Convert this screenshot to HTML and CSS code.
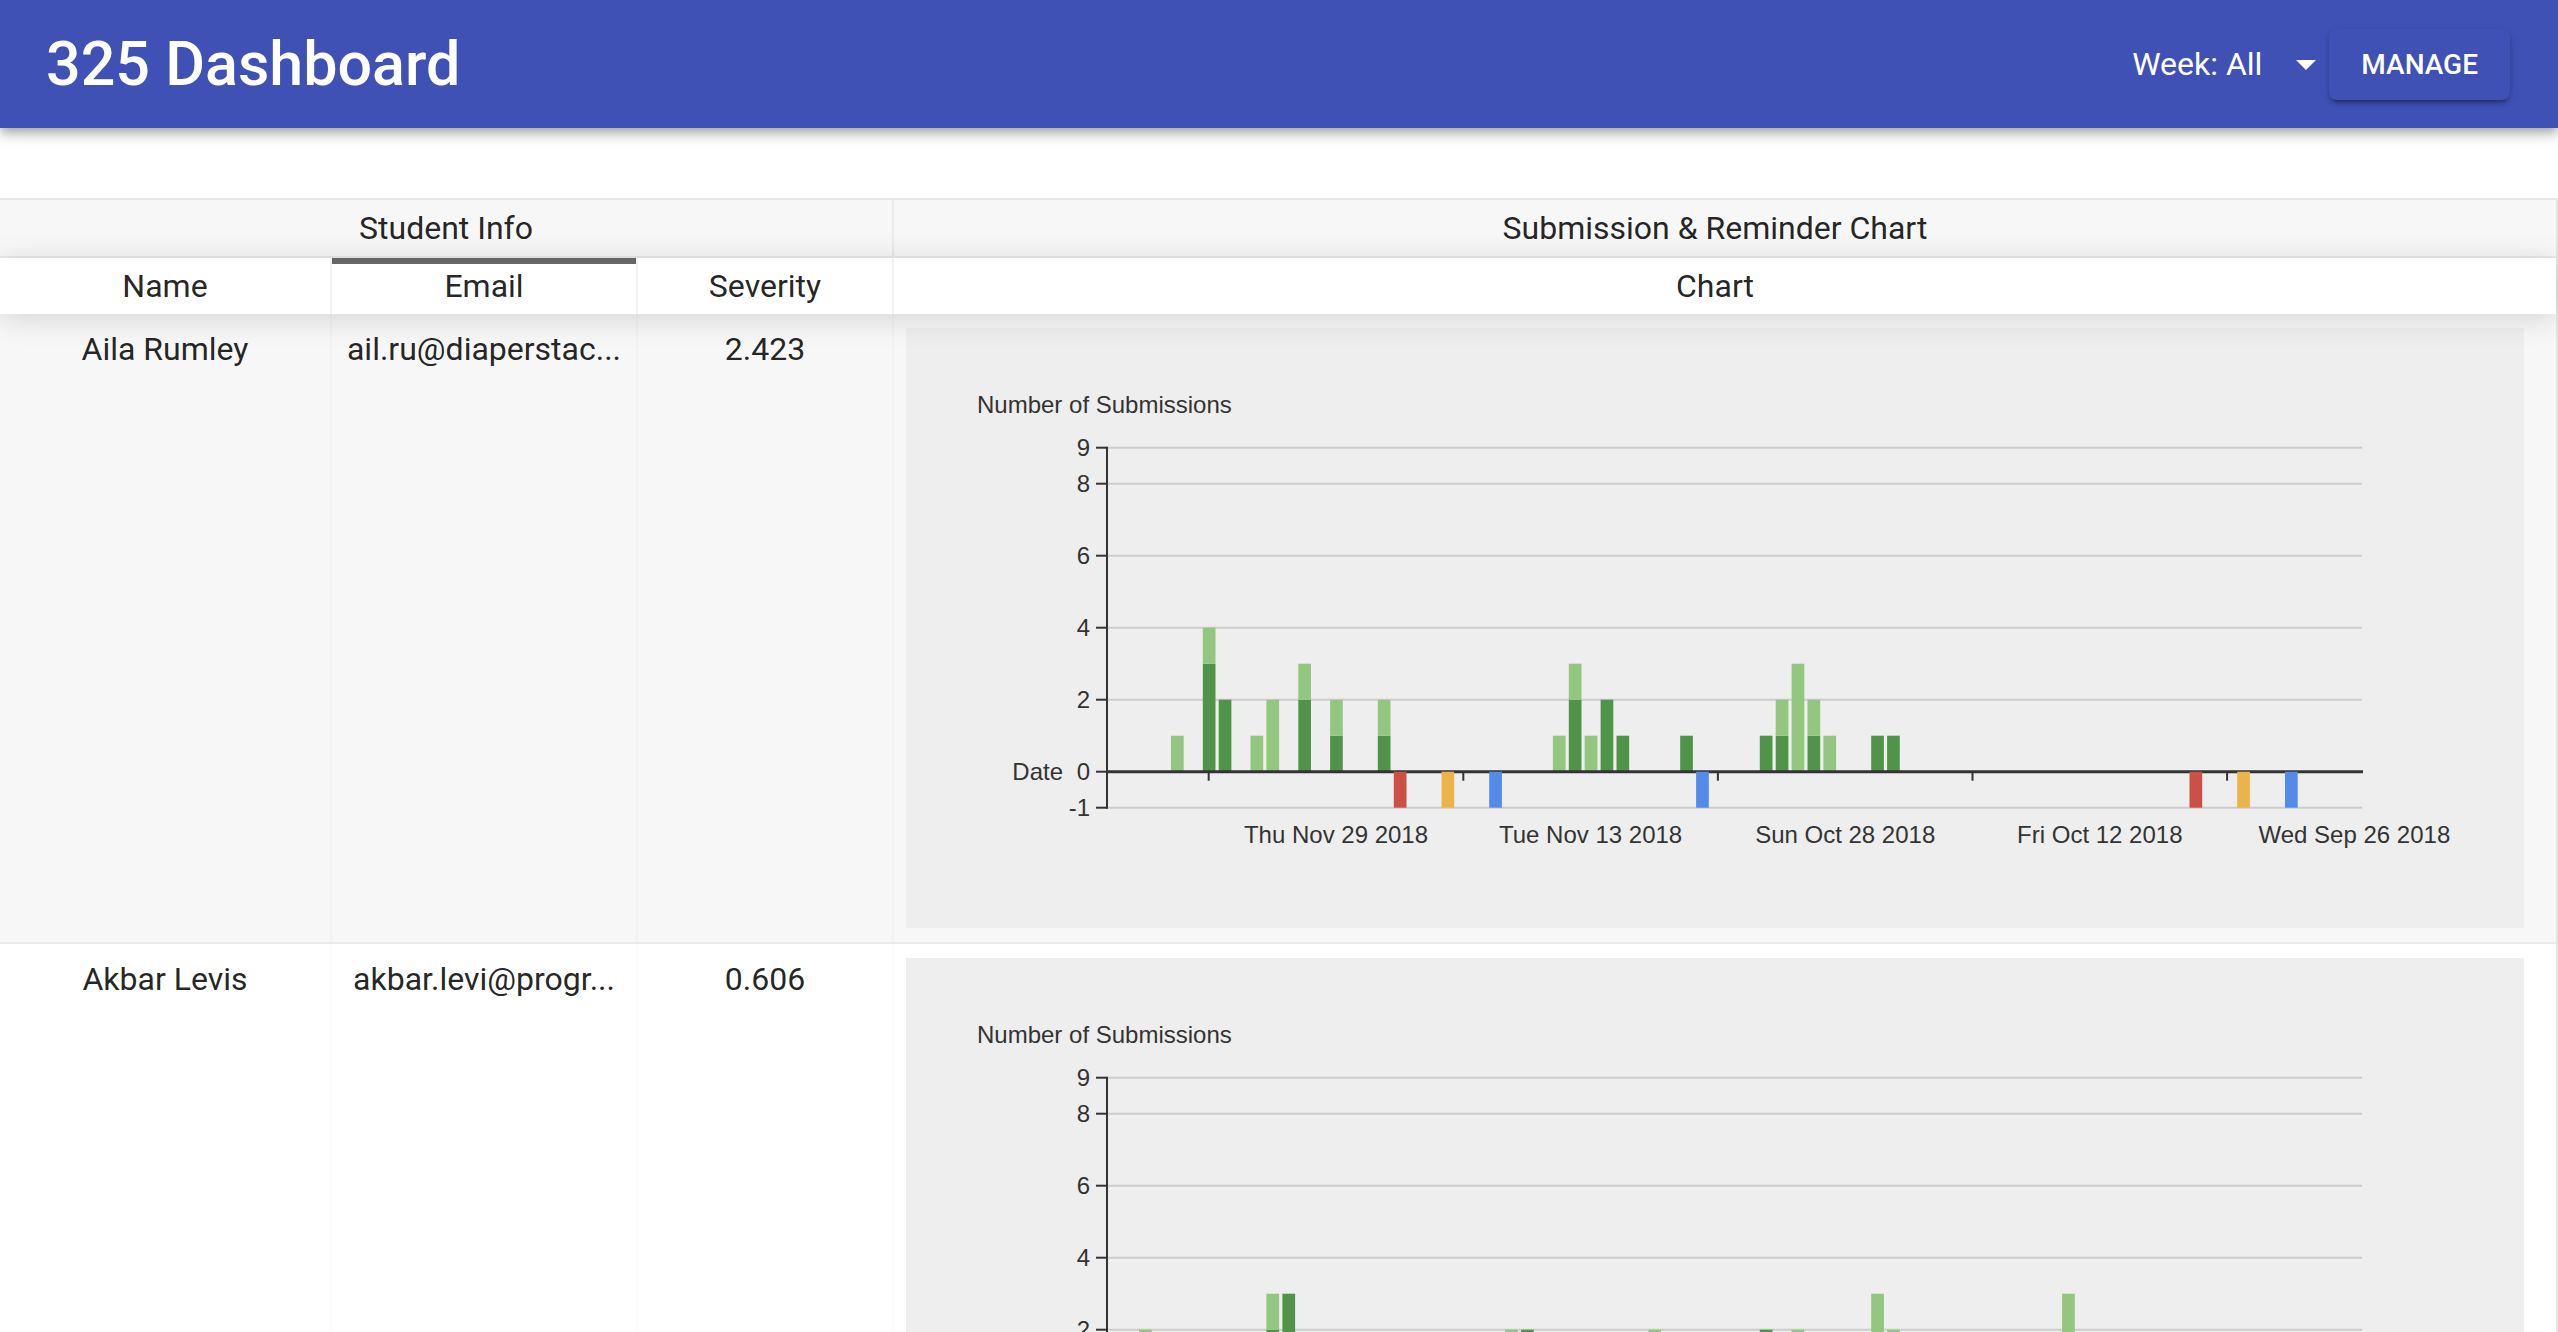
FILE: index.html
```html
<!DOCTYPE html>
<html>
<head>
<meta charset="utf-8">
<title>325 Dashboard</title>
<link rel="stylesheet" href="styles.css">
</head>
<body>
<header class="appbar">
  <h1 class="title">325 Dashboard</h1>
  <div class="week-select">
    <span class="week-label">Week: All</span>
    <svg class="drop-icon" viewBox="0 0 24 24"><path d="M7 10l5 5 5-5z"/></svg>
  </div>
  <button class="manage-btn">MANAGE</button>
</header>

<main class="content">
  <div class="rtable">
    <div class="thead groups">
      <div class="th g-student">Student Info</div>
      <div class="th g-chart">Submission &amp; Reminder Chart</div>
    </div>
    <div class="thead header">
      <div class="th c-name">Name</div>
      <div class="th c-email sort-asc">Email</div>
      <div class="th c-sev">Severity</div>
      <div class="th c-chart">Chart</div>
    </div>

    <div class="tbody">
      <div class="tr-group odd">
        <div class="td c-name">Aila Rumley</div>
        <div class="td c-email">ail.ru@diaperstac...</div>
        <div class="td c-sev">2.423</div>
        <div class="td c-chart">
          <div class="chart-box">
            <svg class="chart" width="1618" height="600" viewBox="0 0 1618 600">
              <text class="ctitle" x="71" y="85">Number of Submissions</text>
              <g class="grid">
                <line x1="201" x2="1456" y1="119.7" y2="119.7"/>
                <line x1="201" x2="1456" y1="155.7" y2="155.7"/>
                <line x1="201" x2="1456" y1="227.7" y2="227.7"/>
                <line x1="201" x2="1456" y1="299.7" y2="299.7"/>
                <line x1="201" x2="1456" y1="371.7" y2="371.7"/>
                <line x1="201" x2="1456" y1="479.7" y2="479.7"/>
              </g>
              <g class="ylab">
                <text x="184" y="128.3">9</text>
                <text x="184" y="164.3">8</text>
                <text x="184" y="236.3">6</text>
                <text x="184" y="308.3">4</text>
                <text x="184" y="380.3">2</text>
                <text x="184" y="452.3">0</text>
                <text x="184" y="488.3">-1</text>
                <text x="157" y="452.3">Date</text>
              </g>
              <g class="bars">
                <rect class="bl" x="265.0" y="407.7" width="12.7" height="36"/>
                <rect class="bd" x="296.8" y="335.7" width="12.7" height="108"/>
                <rect class="bl" x="296.8" y="299.7" width="12.7" height="36"/>
                <rect class="bd" x="312.7" y="371.7" width="12.7" height="72"/>
                <rect class="bl" x="344.5" y="407.7" width="12.7" height="36"/>
                <rect class="bl" x="360.4" y="371.7" width="12.7" height="72"/>
                <rect class="bd" x="392.3" y="371.7" width="12.7" height="72"/>
                <rect class="bl" x="392.3" y="335.7" width="12.7" height="36"/>
                <rect class="bd" x="424.1" y="407.7" width="12.7" height="36"/>
                <rect class="bl" x="424.1" y="371.7" width="12.7" height="36"/>
                <rect class="bd" x="471.8" y="407.7" width="12.7" height="36"/>
                <rect class="bl" x="471.8" y="371.7" width="12.7" height="36"/>
                <rect class="bl" x="646.9" y="407.7" width="12.7" height="36"/>
                <rect class="bd" x="662.8" y="371.7" width="12.7" height="72"/>
                <rect class="bl" x="662.8" y="335.7" width="12.7" height="36"/>
                <rect class="bl" x="678.7" y="407.7" width="12.7" height="36"/>
                <rect class="bd" x="694.6" y="371.7" width="12.7" height="72"/>
                <rect class="bd" x="710.5" y="407.7" width="12.7" height="36"/>
                <rect class="bd" x="774.2" y="407.7" width="12.7" height="36"/>
                <rect class="bd" x="853.8" y="407.7" width="12.7" height="36"/>
                <rect class="bd" x="869.7" y="407.7" width="12.7" height="36"/>
                <rect class="bl" x="869.7" y="371.7" width="12.7" height="36"/>
                <rect class="bl" x="885.6" y="335.7" width="12.7" height="108"/>
                <rect class="bd" x="901.5" y="407.7" width="12.7" height="36"/>
                <rect class="bl" x="901.5" y="371.7" width="12.7" height="36"/>
                <rect class="bl" x="917.4" y="407.7" width="12.7" height="36"/>
                <rect class="bd" x="965.2" y="407.7" width="12.7" height="36"/>
                <rect class="bd" x="981.1" y="407.7" width="12.7" height="36"/>
              </g>
              <line class="zero" x1="201" x2="1457" y1="443.7" y2="443.7"/>
              <g class="bars">
                <rect class="br" x="487.8" y="443.7" width="12.7" height="36"/>
                <rect class="by" x="535.5" y="443.7" width="12.7" height="36"/>
                <rect class="bb" x="583.2" y="443.7" width="12.7" height="36"/>
                <rect class="bb" x="790.1" y="443.7" width="12.7" height="36"/>
                <rect class="br" x="1283.5" y="443.7" width="12.7" height="36"/>
                <rect class="by" x="1331.2" y="443.7" width="12.7" height="36"/>
                <rect class="bb" x="1379.0" y="443.7" width="12.7" height="36"/>
              </g>
              <g class="axis">
                <line x1="201" x2="201" y1="118.7" y2="480.7"/>
                <line x1="190" x2="201" y1="119.7" y2="119.7"/>
                <line x1="190" x2="201" y1="155.7" y2="155.7"/>
                <line x1="190" x2="201" y1="227.7" y2="227.7"/>
                <line x1="190" x2="201" y1="299.7" y2="299.7"/>
                <line x1="190" x2="201" y1="371.7" y2="371.7"/>
                <line x1="190" x2="201" y1="443.7" y2="443.7"/>
                <line x1="190" x2="201" y1="479.7" y2="479.7"/>
                <line x1="302.7" x2="302.7" y1="443.7" y2="452.7"/>
                <line x1="557.3" x2="557.3" y1="443.7" y2="452.7"/>
                <line x1="811.9" x2="811.9" y1="443.7" y2="452.7"/>
                <line x1="1066.5" x2="1066.5" y1="443.7" y2="452.7"/>
                <line x1="1321.1" x2="1321.1" y1="443.7" y2="452.7"/>
              </g>
              <g class="xlab">
                <text x="430" y="515">Thu Nov 29 2018</text>
                <text x="684.6" y="515">Tue Nov 13 2018</text>
                <text x="939.2" y="515">Sun Oct 28 2018</text>
                <text x="1193.8" y="515">Fri Oct 12 2018</text>
                <text x="1448.4" y="515">Wed Sep 26 2018</text>
              </g>
            </svg>
          </div>
        </div>
      </div>

      <div class="tr-group">
        <div class="td c-name">Akbar Levis</div>
        <div class="td c-email">akbar.levi@progr...</div>
        <div class="td c-sev">0.606</div>
        <div class="td c-chart">
          <div class="chart-box">
            <svg class="chart" width="1618" height="600" viewBox="0 0 1618 600">
              <text class="ctitle" x="71" y="85">Number of Submissions</text>
              <g class="grid">
                <line x1="201" x2="1456" y1="119.7" y2="119.7"/>
                <line x1="201" x2="1456" y1="155.7" y2="155.7"/>
                <line x1="201" x2="1456" y1="227.7" y2="227.7"/>
                <line x1="201" x2="1456" y1="299.7" y2="299.7"/>
                <line x1="201" x2="1456" y1="371.7" y2="371.7"/>
                <line x1="201" x2="1456" y1="479.7" y2="479.7"/>
              </g>
              <g class="ylab">
                <text x="184" y="128.3">9</text>
                <text x="184" y="164.3">8</text>
                <text x="184" y="236.3">6</text>
                <text x="184" y="308.3">4</text>
                <text x="184" y="380.3">2</text>
                <text x="184" y="452.3">0</text>
                <text x="184" y="488.3">-1</text>
                <text x="157" y="452.3">Date</text>
              </g>
              <g class="bars">
                <rect class="bl" x="233.1" y="371.7" width="12.7" height="72"/>
                <rect class="bd" x="360.4" y="371.7" width="12.7" height="72"/>
                <rect class="bl" x="360.4" y="335.7" width="12.7" height="36"/>
                <rect class="bd" x="376.4" y="335.7" width="12.7" height="108"/>
                <rect class="bl" x="599.1" y="371.7" width="12.7" height="72"/>
                <rect class="bd" x="615.1" y="371.7" width="12.7" height="72"/>
                <rect class="bl" x="742.4" y="371.7" width="12.7" height="72"/>
                <rect class="bd" x="853.8" y="371.7" width="12.7" height="72"/>
                <rect class="bl" x="885.6" y="371.7" width="12.7" height="72"/>
                <rect class="bl" x="965.2" y="335.7" width="12.7" height="108"/>
                <rect class="bl" x="981.1" y="371.7" width="12.7" height="72"/>
                <rect class="bl" x="1156.1" y="335.7" width="12.7" height="108"/>
              </g>
              <line class="zero" x1="201" x2="1457" y1="443.7" y2="443.7"/>
              <g class="axis">
                <line x1="201" x2="201" y1="118.7" y2="480.7"/>
                <line x1="190" x2="201" y1="119.7" y2="119.7"/>
                <line x1="190" x2="201" y1="155.7" y2="155.7"/>
                <line x1="190" x2="201" y1="227.7" y2="227.7"/>
                <line x1="190" x2="201" y1="299.7" y2="299.7"/>
                <line x1="190" x2="201" y1="371.7" y2="371.7"/>
                <line x1="190" x2="201" y1="443.7" y2="443.7"/>
                <line x1="190" x2="201" y1="479.7" y2="479.7"/>
              </g>
            </svg>
          </div>
        </div>
      </div>
    </div>
  </div>
</main>
</body>
</html>
```

FILE: styles.css
```css
* {
  box-sizing: border-box;
}

html,
body {
  margin: 0;
  padding: 0;
  overflow: hidden;
  background: #ffffff;
}

body {
  width: 2558px;
  font-family: Roboto, "Liberation Sans", Arial, sans-serif;
  color: rgba(0, 0, 0, 0.87);
}

/* ---------- App bar ---------- */
.appbar {
  position: relative;
  z-index: 2;
  display: flex;
  align-items: center;
  height: 128px;
  padding: 0 48px 0 46px;
  background: #3f51b5;
  color: #ffffff;
  box-shadow: 0 4px 8px -2px rgba(0, 0, 0, 0.2),
              0 8px 10px 0 rgba(0, 0, 0, 0.14),
              0 2px 20px 0 rgba(0, 0, 0, 0.12);
}

.title {
  flex: 1;
  margin: 0;
  font-size: 61px;
  font-weight: 500;
  line-height: 1;
}

.week-select {
  display: flex;
  align-items: center;
}

.week-label {
  font-size: 32px;
  line-height: 1;
  color: #ffffff;
}

.drop-icon {
  width: 48px;
  height: 48px;
  margin-left: 20px;
  fill: #ffffff;
}

.manage-btn {
  font-family: Roboto, "Liberation Sans", Arial, sans-serif;
  font-size: 28px;
  font-weight: 500;
  letter-spacing: 0;
  line-height: 49px;
  padding: 11px 32px;
  margin-left: -1px;
  border: 0;
  border-radius: 8px;
  background: #3f51b5;
  color: #ffffff;
  box-shadow: 0 6px 2px -4px rgba(0, 0, 0, 0.2),
              0 4px 4px 0 rgba(0, 0, 0, 0.14),
              0 2px 10px 0 rgba(0, 0, 0, 0.12);
}

/* ---------- Table ---------- */
.content {
  padding-top: 70px;
}

.rtable {
  border: 2px solid rgba(0, 0, 0, 0.1);
  border-left: 0;
  font-size: 32px;
}

.thead {
  display: flex;
}

.th {
  flex: none;
  padding: 10px;
  line-height: 36px;
  text-align: center;
  white-space: nowrap;
  overflow: hidden;
  border-right: 2px solid rgba(0, 0, 0, 0.05);
}

.th:last-child {
  border-right: 0;
}

.groups {
  background: rgba(0, 0, 0, 0.03);
  border-bottom: 2px solid rgba(0, 0, 0, 0.05);
}

.header {
  position: relative;
  z-index: 1;
  background: #ffffff;
  box-shadow: 0 4px 30px 0 rgba(0, 0, 0, 0.15);
}

.sort-asc {
  box-shadow: inset 0 6px 0 0 rgba(0, 0, 0, 0.6);
}

.g-student {
  width: 894px;
}

.g-chart {
  width: 1642px;
}

.c-name {
  width: 332px;
}

.c-email {
  width: 306px;
}

.c-sev {
  width: 256px;
}

.c-chart {
  width: 1642px;
}

.tr-group {
  display: flex;
  border-bottom: 2px solid rgba(0, 0, 0, 0.05);
}

.tr-group.odd {
  background: rgba(0, 0, 0, 0.03);
}

.td {
  flex: none;
  padding: 16px 10px;
  line-height: normal;
  text-align: center;
  white-space: nowrap;
  overflow: hidden;
  text-overflow: ellipsis;
  border-right: 2px solid rgba(0, 0, 0, 0.02);
}

.td.c-chart {
  padding: 14px 10px 14px 12px;
  border-right: 0;
}

/* ---------- Chart ---------- */
.chart-box {
  width: 1618px;
  height: 600px;
  background: #eeeeee;
}

.chart {
  display: block;
  font-family: "Liberation Sans", Arial, sans-serif;
  font-size: 24px;
}

.chart text {
  fill: #333333;
}

.ylab text {
  text-anchor: end;
}

.xlab text {
  text-anchor: middle;
}

.grid line {
  stroke: #cccccc;
  stroke-width: 2;
}

.zero {
  stroke: #333333;
  stroke-width: 3;
}

.axis line {
  stroke: #333333;
  stroke-width: 2;
}

.bd {
  fill: #50944a;
}

.bl {
  fill: #93c77f;
}

.br {
  fill: #cb5146;
}

.by {
  fill: #ebb44b;
}

.bb {
  fill: #548be8;
}
```
